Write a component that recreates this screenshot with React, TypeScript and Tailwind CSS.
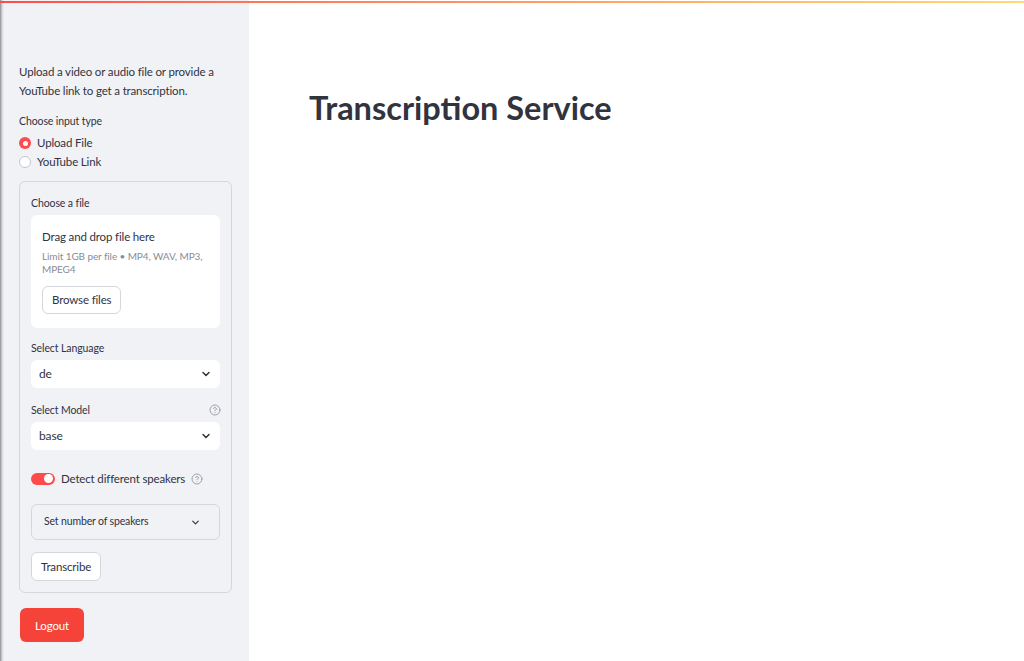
import { ChevronDown, CircleHelp } from "lucide-react";

const Label = ({ children, help }: { children: React.ReactNode; help?: boolean }) => (
  <div className="flex items-center justify-between text-[10.5px] leading-[14px] text-[#31333f] mb-[5px] tracking-[-0.1px]">
    <span>{children}</span>
    {help && <CircleHelp className="h-[12px] w-[12px] text-[#8c8e98] mr-[-1px]" strokeWidth={1.6} />}
  </div>
);

const Select = ({ value }: { value: string }) => (
  <div className="flex items-center justify-between h-[28px] bg-white rounded-[6px] pl-[8px] pr-[8px] text-[12px] text-[#31333f]">
    <span>{value}</span>
    <ChevronDown className="h-[12px] w-[12px] text-[#31333f]" strokeWidth={3} />
  </div>
);

export default function App() {
  return (
    <div className="relative flex h-[661px] w-full overflow-hidden bg-white text-[#31333f] [font-family:Lato,'Noto_Sans',sans-serif]">
      {/* top decoration */}
      <div className="absolute left-0 right-0 top-[1px] h-[2px] bg-gradient-to-r from-[#ff4b4b] to-[#ffd97a]" />

      {/* Sidebar */}
      <aside className="flex w-[249px] shrink-0 bg-[#f0f2f6]">
        <div className="w-[4px] bg-gradient-to-r from-[#8d8e92] via-[#d3d5d9] to-[#f0f2f6]" />
        <div className="flex-1 pl-[15px] pr-[17px] pt-[62px] text-[11.5px] tracking-[-0.15px]">
          <p className="leading-[19px] text-[#31333f]">
            Upload a video or audio file or provide a YouTube link to get a transcription.
          </p>

          <div className="mt-[14px] text-[10.5px] leading-[14px] tracking-[-0.1px]">Choose input type</div>
          <div className="mt-[8px] flex flex-col gap-[5px] leading-[14px]">
            <label className="flex items-center gap-[6px]">
              <span className="flex h-[12px] w-[12px] items-center justify-center rounded-full bg-[#ff4b4b]">
                <span className="h-[5px] w-[5px] rounded-full bg-white" />
              </span>
              Upload File
            </label>
            <label className="flex items-center gap-[6px]">
              <span className="h-[12px] w-[12px] rounded-full border border-[#c5c7cc] bg-white" />
              YouTube Link
            </label>
          </div>

          <div className="mt-[12px] rounded-[6px] border border-[#d6d7dc] px-[11px] pt-[14px] pb-[11px]">
            <Label>Choose a file</Label>
            <div className="rounded-[6px] bg-white px-[11px] pt-[14px] pb-[14px]">
              <div className="leading-[16px] text-[#31333f]">Drag and drop file here</div>
              <div className="mt-[5px] text-[10px] leading-[13px] text-[#8a8c96] tracking-[-0.1px]">
                Limit 1GB per file • MP4, WAV, MP3, MPEG4
              </div>
              <button className="mt-[10px] h-[28px] rounded-[6px] border border-[#d6d7dc] bg-white px-[9px] text-[#31333f]">
                Browse files
              </button>
            </div>

            <div className="mt-[13px]">
              <Label>Select Language</Label>
              <Select value="de" />
            </div>

            <div className="mt-[15px]">
              <Label help>Select Model</Label>
              <Select value="base" />
            </div>

            <div className="mt-[20px] flex items-center gap-[6px]">
              <span className="flex h-[12px] w-[24px] items-center justify-end rounded-full bg-[#ff4b4b] pr-[2px]">
                <span className="h-[9px] w-[9px] rounded-full bg-white" />
              </span>
              <span>Detect different speakers</span>
              <CircleHelp className="h-[12px] w-[12px] text-[#8c8e98]" strokeWidth={1.6} />
            </div>

            <div className="mt-[17px] flex h-[36px] items-center justify-between rounded-[6px] border border-[#d6d7dc] pl-[12px] pr-[18px] text-[10.5px]">
              <span>Set number of speakers</span>
              <ChevronDown className="h-[11px] w-[11px]" strokeWidth={2.5} />
            </div>

            <button className="mt-[12px] h-[29px] rounded-[6px] border border-[#d6d7dc] bg-white px-[9px] text-[#31333f]">
              Transcribe
            </button>
          </div>

          <button className="ml-[1px] mt-[15px] h-[34px] rounded-[6px] bg-[#f5433a] px-[15px] text-white">
            Logout
          </button>
        </div>
      </aside>

      {/* Main */}
      <main className="flex-1 pl-[60px] pt-[86px]">
        <h1 className="text-[32.5px] font-bold leading-[44px] text-[#31333f]">Transcription Service</h1>
      </main>
    </div>
  );
}
